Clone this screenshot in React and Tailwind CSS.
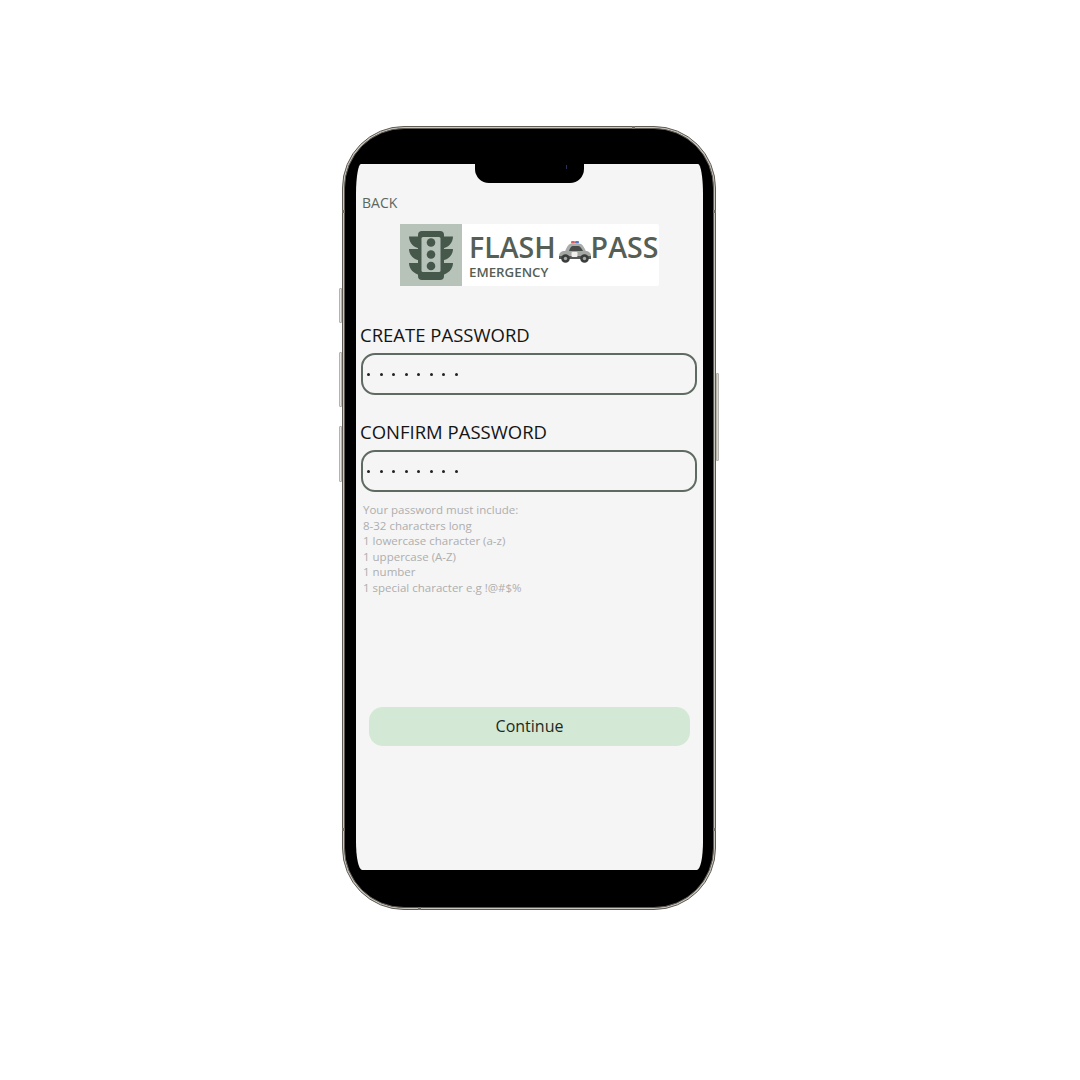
const font = { fontFamily: '"Open Sans", "Noto Sans", sans-serif' };

function TrafficLight() {
  const d = "#46584a";
  return (
    <svg width="62" height="62" viewBox="0 0 62 62" className="block">
      <path d="M20 12.5H9C9 19 14 24 20 24.5Z M20 25H9C9 31 14 36 20 36.5Z M20 39H9C9 45 14 50 20 51Z" fill={d} />
      <path d="M42 12.5H53C53 19 48 24 42 24.5Z M42 25H53C53 31 48 36 42 36.5Z M42 39H53C53 45 48 50 42 51Z" fill={d} />
      <rect x="18" y="7" width="26" height="49" rx="4" fill={d} />
      <rect x="21.5" y="13" width="19" height="35" rx="1.5" fill="#b7c3b9" />
      <circle cx="31" cy="18.5" r="4.3" fill={d} />
      <circle cx="31" cy="30.5" r="4.3" fill={d} />
      <circle cx="31" cy="42" r="4.3" fill={d} />
    </svg>
  );
}

function Car() {
  return (
    <svg width="32" height="22" viewBox="0 0 32 22" className="block">
      <rect x="12" y="0" width="4" height="2.5" rx="1" fill="#d9606a" />
      <rect x="16" y="0" width="4" height="2.5" rx="1" fill="#5a78c9" />
      <path d="M6 10.5C8 5 10 2.5 13 2.5H20C23 2.5 25 6 27 10.5Z" fill="#a9aca8" />
      <path d="M10 10C11 7 12 5 14 5H19C21 5 22.5 7 24 10Z" fill="#474b49" />
      <path d="M0 15C0 12 2 10 6 10H26C30 10 32 12 32 15V18H0Z" fill="#a4a7a3" />
      <path d="M0 15H32V18H0Z" fill="#565a58" />
      <rect x="12.5" y="11" width="6" height="5" rx="1" fill="#f0f0ec" />
      <circle cx="6.5" cy="17.5" r="4.3" fill="#3a3d3c" />
      <circle cx="6.5" cy="17.5" r="1.7" fill="#a5a8a5" />
      <circle cx="25.5" cy="17.5" r="4.3" fill="#3a3d3c" />
      <circle cx="25.5" cy="17.5" r="1.7" fill="#a5a8a5" />
    </svg>
  );
}

function PasswordField({ label }) {
  return (
    <div className="flex flex-col">
      <div className="ml-[4px] text-[18.5px] leading-[24px] text-[#141414]">{label}</div>
      <div className="ml-[5px] mt-[6px] flex h-[42px] w-[336px] items-center gap-[9.5px] rounded-[14px] border-2 border-[#5f6b62] pl-[4px]">
        {[0, 1, 2, 3, 4, 5, 6, 7].map((i) => (
          <span key={i} className="h-[3px] w-[3px] rounded-full bg-[#222]" />
        ))}
      </div>
    </div>
  );
}

function Tick({ className }) {
  return <div className={`absolute bg-[#77736b] ${className}`} />;
}

export default function App() {
  const hints = [
    "Your password must include:",
    "8-32 characters long",
    "1 lowercase character (a-z)",
    "1 uppercase (A-Z)",
    "1 number",
    "1 special character e.g !@#$%",
  ];
  return (
    <div className="h-[1080px] w-[1080px] overflow-hidden bg-white pl-[342px] pt-[126px]" style={font}>
      <div className="relative h-[784px] w-[374px]">
        <div className="absolute left-[-3px] top-[162px] h-[35px] w-[3px] rounded-l-[1px] border border-[#b5b2ab] bg-[#e8e6e1]" />
        <div className="absolute left-[-3px] top-[226px] h-[55px] w-[3px] rounded-l-[1px] border border-[#b5b2ab] bg-[#e8e6e1]" />
        <div className="absolute left-[-3px] top-[300px] h-[56px] w-[3px] rounded-l-[1px] border border-[#b5b2ab] bg-[#e8e6e1]" />
        <div className="absolute right-[-3px] top-[247px] h-[88px] w-[3px] rounded-r-[1px] border border-[#b5b2ab] bg-[#d9d6d0]" />
        <div className="h-full w-full rounded-[62px] border border-[#5f5b54] bg-[#c9c6bf] p-[1px]">
          <div className="h-full w-full rounded-[60px] border border-[#5f5b54] bg-black pb-[37px] pl-[11px] pr-[10px] pt-[35px]">
            <div className="relative h-full w-full rounded-t-[5px_30px] rounded-b-[6px_28px] bg-[#f5f5f5]">
              <div className="absolute left-[119px] top-0 flex h-[19px] w-[109px] items-start justify-center rounded-b-[14px] bg-black">
                <span className="ml-[74px] mt-[1px] h-[4px] w-[1px] bg-[#2f2f55]" />
              </div>
              <div className="flex flex-col pt-[29px]">
                <div className="ml-[6px] text-[14px] leading-[19px] text-[#5c675c]">BACK</div>
                <div className="ml-[44px] mt-[12px] flex h-[62px] w-[259px]">
                  <div className="h-[62px] w-[62px] bg-[#b7c3b9]"><TrafficLight /></div>
                  <div className="w-[197px] rounded-r-[2px] bg-white pl-[7px] text-[#555f55]">
                    <div className="flex h-[40px] items-start pt-[11px]">
                      <span className="text-[28.5px] font-semibold leading-[25px]">FLASH</span>
                      <span className="ml-[3px] mt-[6px]"><Car /></span>
                      <span className="text-[28.5px] font-semibold leading-[25px]">PASS</span>
                    </div>
                    <div className="text-[13.3px] font-semibold leading-[17px]">EMERGENCY</div>
                  </div>
                </div>
                <div className="mt-[37px] flex flex-col gap-[25px]">
                  <PasswordField label="CREATE PASSWORD" />
                  <PasswordField label="CONFIRM PASSWORD" />
                </div>
                <div className="ml-[7px] mt-[10px] text-[11.5px] leading-[15.5px] text-[#aeaeae]">
                  {hints.map((h) => (
                    <div key={h}>{h}</div>
                  ))}
                </div>
                <button className="ml-[13px] mt-[112px] h-[39px] w-[321px] rounded-[14px] bg-[#d3e8d5] pb-[1px] text-[16px] text-[#1c2a1e]">
                  Continue
                </button>
              </div>
            </div>
          </div>
        </div>
        <Tick className="left-[290px] top-0 h-[3px] w-[3px]" />
        <Tick className="bottom-0 left-[76px] h-[3px] w-[3px]" />
        <Tick className="left-0 top-[84px] h-[3px] w-[3px]" />
        <Tick className="right-0 top-[84px] h-[3px] w-[3px]" />
        <Tick className="left-0 top-[702px] h-[3px] w-[3px]" />
        <Tick className="right-0 top-[702px] h-[3px] w-[3px]" />
      </div>
    </div>
  );
}
